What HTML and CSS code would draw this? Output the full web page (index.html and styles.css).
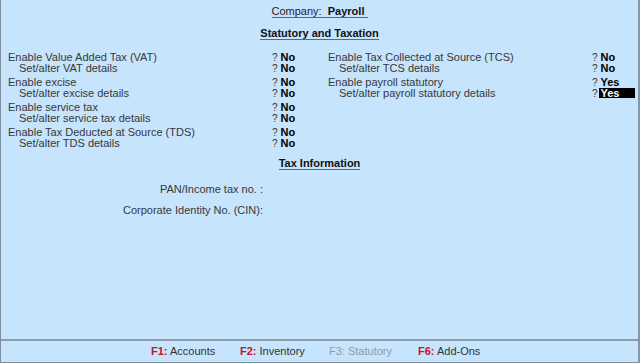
FILE: index.html
```html
<!DOCTYPE html>
<html>
<head>
<meta charset="utf-8">
<link rel="stylesheet" href="styles.css">
</head>
<body>
<div class="app">
  <div class="main">
    <div class="title"><span class="ul">Company: &nbsp;<b>Payroll</b>&nbsp;</span></div>
    <div class="title sec"><span class="ul"><b>Statutory and Taxation</b></span></div>
    <div class="cols">
      <div class="col left">
        <div class="group">
          <div class="row"><span class="lbl">Enable Value Added Tax (VAT)</span><span class="q">?</span><span class="val">No</span></div>
          <div class="row"><span class="lbl sub">Set/alter VAT details</span><span class="q">?</span><span class="val">No</span></div>
        </div>
        <div class="group">
          <div class="row"><span class="lbl">Enable excise</span><span class="q">?</span><span class="val">No</span></div>
          <div class="row"><span class="lbl sub">Set/alter excise details</span><span class="q">?</span><span class="val">No</span></div>
        </div>
        <div class="group">
          <div class="row"><span class="lbl">Enable service tax</span><span class="q">?</span><span class="val">No</span></div>
          <div class="row"><span class="lbl sub">Set/alter service tax details</span><span class="q">?</span><span class="val">No</span></div>
        </div>
        <div class="group">
          <div class="row"><span class="lbl">Enable Tax Deducted at Source (TDS)</span><span class="q">?</span><span class="val">No</span></div>
          <div class="row"><span class="lbl sub">Set/alter TDS details</span><span class="q">?</span><span class="val">No</span></div>
        </div>
      </div>
      <div class="col right">
        <div class="group">
          <div class="row"><span class="lbl">Enable Tax Collected at Source (TCS)</span><span class="q">?</span><span class="val">No</span></div>
          <div class="row"><span class="lbl sub">Set/alter TCS details</span><span class="q">?</span><span class="val">No</span></div>
        </div>
        <div class="group">
          <div class="row"><span class="lbl">Enable payroll statutory</span><span class="q">?</span><span class="val">Yes</span></div>
          <div class="row"><span class="lbl sub">Set/alter payroll statutory details</span><span class="q">?</span><span class="val sel">Yes</span></div>
        </div>
      </div>
    </div>
    <div class="title tax"><span class="ul"><b>Tax Information</b></span></div>
    <div class="info">
      <div class="irow"><span class="ilbl">PAN/Income tax no. :</span></div>
      <div class="irow"><span class="ilbl">Corporate Identity No. (CIN):</span></div>
    </div>
  </div>
  <div class="footer">
    <span class="fitem"><span class="key">F1:</span> Accounts</span>
    <span class="fitem"><span class="key">F2:</span> Inventory</span>
    <span class="fitem off">F3: Statutory</span>
    <span class="fitem"><span class="key">F6:</span> Add-Ons</span>
  </div>
</div>
</body>
</html>
```

FILE: styles.css
```css
html, body {
  margin: 0;
  padding: 0;
}
body {
  width: 640px;
  height: 363px;
  overflow: hidden;
  background: #c6e4fc;
  font-family: "Liberation Sans", Arial, sans-serif;
  font-size: 11px;
  color: #383838;
}
.app {
  box-sizing: border-box;
  width: 640px;
  height: 363px;
  display: flex;
  flex-direction: column;
  border-left: 1px solid #7f8e9c;
  border-right: 2px solid #8796a4;
}
.main {
  flex: 1;
  padding-top: 5px;
}
.title {
  text-align: center;
  line-height: 12px;
  color: #1e1e1e;
}
.title .ul {
  display: inline-block;
  border-bottom: 1px solid #5d6872;
}
.title b {
  color: #111;
}
.title.sec {
  margin-top: 9px;
}
.cols {
  display: flex;
  margin-top: 11.5px;
  padding-left: 7px;
}
.col {
  display: flex;
  flex-direction: column;
  gap: 3px;
}
.col.left {
  width: 320px;
}
.col.right {
  flex: 1;
}
.row {
  display: flex;
  height: 11px;
  line-height: 11px;
  white-space: nowrap;
}
.lbl {
  width: 264px;
}
.lbl.sub {
  box-sizing: border-box;
  padding-left: 11px;
}
.q {
  width: 8.5px;
  font-size: 10px;
}
.val {
  font-weight: bold;
  color: #000;
}
.val.sel {
  background: #000;
  color: #fff;
  width: 34px;
  margin-left: -1.5px;
  padding-left: 1.5px;
  height: 10.5px;
  line-height: 11px;
}
.title.tax {
  margin-top: 8.5px;
}
.info {
  margin-top: 13.5px;
  display: flex;
  flex-direction: column;
  gap: 10.5px;
}
.irow {
  display: flex;
  line-height: 11px;
}
.ilbl {
  width: 262px;
  text-align: right;
}
.footer {
  box-sizing: border-box;
  height: 24px;
  border-top: 2px solid #8e9dab;
  border-bottom: 1px solid #7f8e9c;
  display: flex;
  align-items: center;
  padding-left: 150px;
  line-height: 21px;
  color: #333;
}
.fitem {
  width: 89px;
  white-space: nowrap;
}
.key {
  color: #c8102e;
  font-weight: bold;
}
.fitem.off {
  color: #8f9ba7;
}
```
